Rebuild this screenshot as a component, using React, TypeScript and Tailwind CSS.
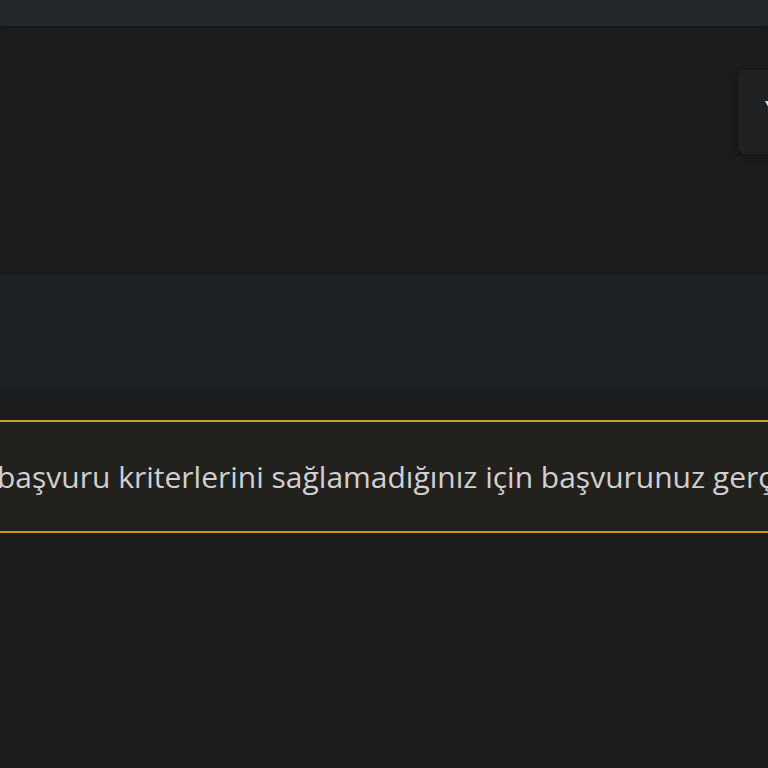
export default function App() {
  return (
    <div className="flex h-[768px] w-[768px] flex-col overflow-hidden bg-[#1b1c1e] font-['Open_Sans',sans-serif]">
      <div className="h-[26px] shrink-0 bg-[#23272a] shadow-[0_1px_2px_rgba(0,0,0,0.4)]" />

      <div className="flex justify-end pt-[44px]">
        <div className="-mr-[40px] flex h-[84px] w-[70px] items-start rounded-[8px] bg-[#1f2123] pl-[27px] pt-[28px] shadow-[0_2px_6px_rgba(0,0,0,0.35)]">
          <span className="text-[15px] font-bold leading-none text-[#e6e6e6]">Y</span>
        </div>
      </div>

      <div className="mt-[120px] h-[114px] shrink-0 bg-[#1f2224] shadow-[0_-1px_2px_rgba(0,0,0,0.25)]" />

      <div className="mt-[32px] flex h-[113px] shrink-0 items-center overflow-hidden border-t-[2px] border-b-[2px] border-t-[#c9a227] border-b-[#d88f1c] bg-[#23211e]">
        <p className="-ml-[3px] whitespace-nowrap text-[30px] text-[#d0d0d0]">
          başvuru kriterlerini sağlamadığınız için başvurunuz gerçekleştirilemedi.
        </p>
      </div>
    </div>
  );
}
